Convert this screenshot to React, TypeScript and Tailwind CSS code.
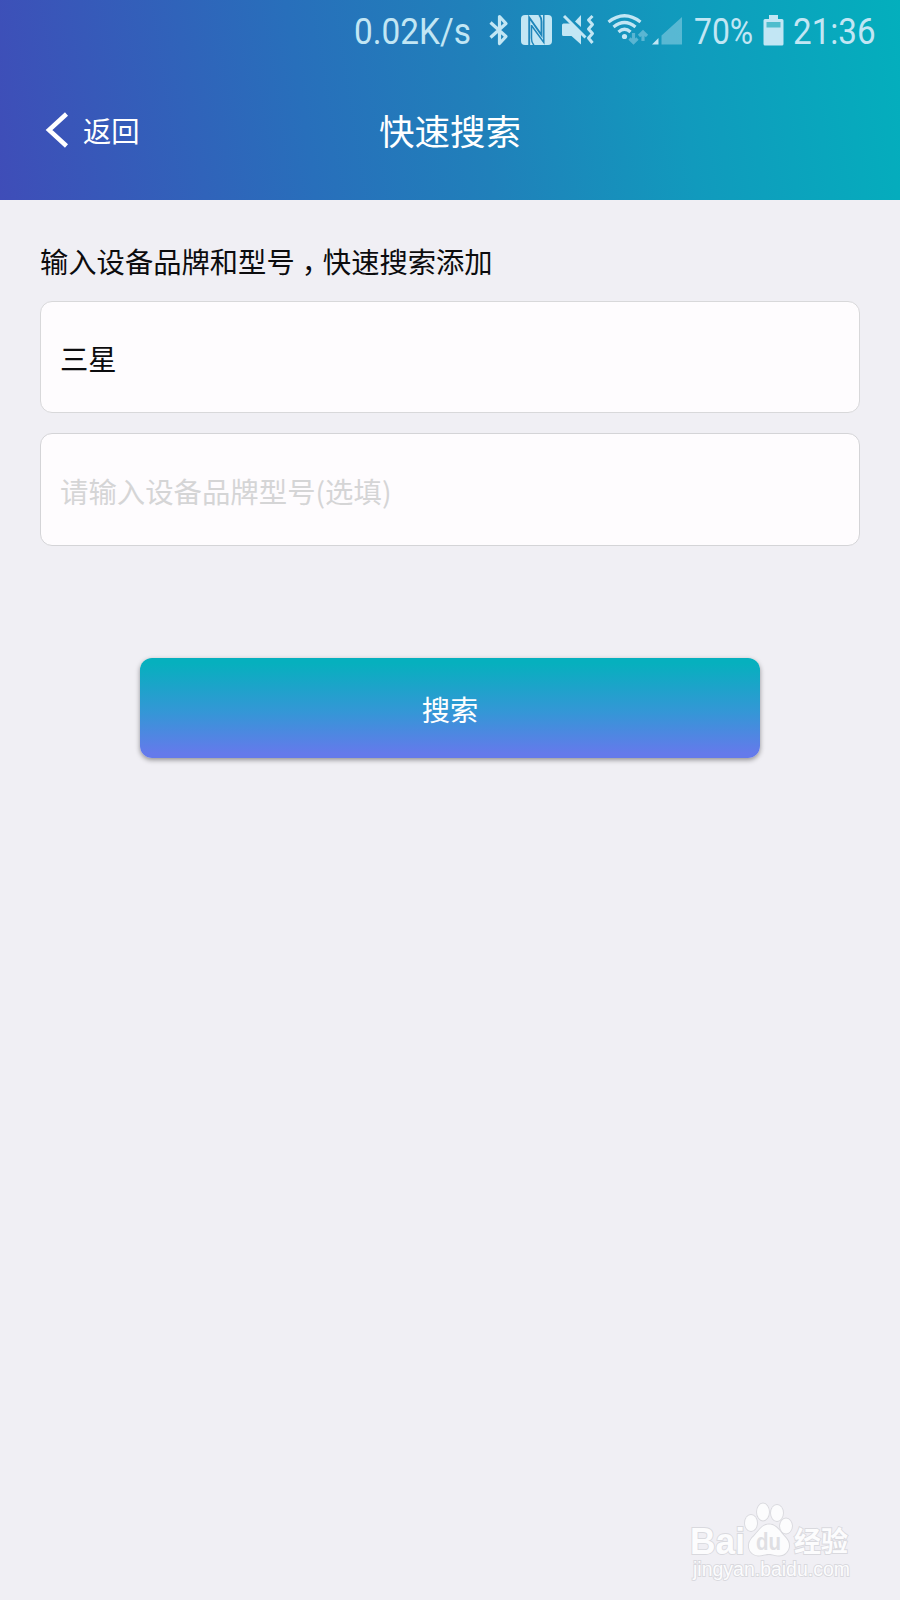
import type { ReactNode } from 'react';

function StatusText({ width, children }: { width: string; children: ReactNode }) {
  return (
    <span className={`mt-[1px] block shrink-0 whitespace-nowrap font-[Roboto,sans-serif] text-[37.5px] leading-[60px] ${width}`}>
      {children}
    </span>
  );
}

function BluetoothIcon() {
  return (
    <svg className="block h-[34px] w-[22px] shrink-0" viewBox="0 0 22 34" fill="none" stroke="currentColor" strokeWidth="3.2">
      <path d="M2.5 9.5 18 23.5 11.5 30.5V3.5L18 10.5 2.5 24.5" strokeLinejoin="round" />
    </svg>
  );
}

function NfcIcon() {
  return (
    <svg className="block h-[30px] w-[31px] shrink-0" viewBox="0 0 31 30">
      <rect width="31" height="30" rx="4" fill="currentColor" />
      <path d="M8.2 30V2.5L20.5 20V7Q20.5 2 18 0" fill="none" stroke="#1f86ba" strokeWidth="1.9" />
      <path d="M10.5 10.5 22.8 27.5V0M10.5 10V23Q10.5 28 13 30" fill="none" stroke="#1f86ba" strokeWidth="1.5" />
    </svg>
  );
}

function MuteVibrateIcon() {
  return (
    <svg className="block h-[32px] w-[34px] shrink-0" viewBox="0 0 34 32" fill="currentColor">
      <path d="M1.5 9.5H9L19 19.5V30.5L9.5 22H1.5Q0 22 0 20.5V11Q0 9.5 1.5 9.5ZM19 1V13L13 7.5Z" />
      <path d="M2 2 23.5 23.5" fill="none" stroke="currentColor" strokeWidth="3" />
      <path d="M30.5 2 26.5 6 30.5 10.5 26.5 15 30.5 19.5 26.5 24 30.5 29" fill="none" stroke="currentColor" strokeWidth="3" strokeLinejoin="round" />
    </svg>
  );
}

function WifiIcon() {
  return (
    <svg className="block h-[32px] w-[42px] shrink-0" viewBox="0 0 42 32" fill="none" stroke="currentColor" strokeWidth="3.2">
      <path d="M1.5 8Q17.5-4.5 33.5 8M6.5 13Q17.5 4 28.5 13M11.5 18Q17.5 12.5 23.5 18" />
      <circle cx="17.5" cy="22.5" r="2.6" fill="currentColor" stroke="none" />
      <g opacity=".4">
        <path d="M26.5 19V28M22.5 24.5 26.5 28.5 30.5 24.5" />
        <path d="M36 27V18M32 22 36 18 40 22" />
      </g>
    </svg>
  );
}

function SignalIcon() {
  return (
    <svg className="block h-[28px] w-[31px] shrink-0" viewBox="0 0 31 28" fill="currentColor">
      <path d="M0 27.5 6.5 21V27.5Z" />
      <path d="M9.5 18.5 30 0V27.5H9.5Z" opacity=".4" />
    </svg>
  );
}

function BatteryIcon() {
  return (
    <svg className="block h-[31px] w-[21px] shrink-0" viewBox="0 0 21 31" fill="currentColor">
      <path d="M6 0H15V4H19Q20.5 4 20.5 5.5V29Q20.5 30.5 19 30.5H2Q.5 30.5 .5 29V5.5Q.5 4 2 4H6Z" />
      <path d="M3.5 7H17.5V12.5H3.5Z" fill="#4fbdcd" />
    </svg>
  );
}

function StatusBar() {
  return (
    <div className="flex h-[60px] items-center pl-[354px] text-[#c2e6f4]">
      <StatusText width="w-[134px]">
        <span className="inline-block origin-left scale-x-[0.89]">0.02K/s</span>
      </StatusText>
      <BluetoothIcon />
      <div className="ml-[11px]"><NfcIcon /></div>
      <div className="ml-[10px]"><MuteVibrateIcon /></div>
      <div className="ml-[11px]"><WifiIcon /></div>
      <div className="ml-[3px] mt-[1px]"><SignalIcon /></div>
      <StatusText width="ml-[11px] w-[69px]">
        <span className="inline-block origin-left scale-x-[0.85]">70%</span>
      </StatusText>
      <BatteryIcon />
      <StatusText width="ml-[9px] w-[90px]">
        <span className="inline-block origin-left scale-x-[0.885]">21:36</span>
      </StatusText>
    </div>
  );
}

function Header() {
  return (
    <header className="h-[200px] bg-[linear-gradient(81deg,#3f4db8_0%,#286fbb_34%,#2080ba_53%,#119abd_75%,#03afbd_100%)]">
      <StatusBar />
      <div className="grid h-[140px] grid-cols-3 items-start pt-[45px] text-white">
        <div className="flex h-[50px] items-center pl-[45px]">
          <svg className="block h-[36px] w-[24px]" viewBox="0 0 24 36" fill="none" stroke="currentColor" strokeWidth="4.5">
            <path d="M21.5 2 4 18 21.5 34" />
          </svg>
          <span className="ml-[14px] text-[28.3px] leading-[50px]">返回</span>
        </div>
        <h1 className="text-center text-[35.5px] leading-[50px]">快速搜索</h1>
      </div>
    </header>
  );
}

function Watermark() {
  return (
    <svg className="block h-[90px] w-[176px] overflow-visible" viewBox="0 0 176 90" fill="#fcfcfd" stroke="#d9d9de" strokeWidth="1.8" paintOrder="stroke">
      <text x="0" y="57" textLength="55" lengthAdjust="spacingAndGlyphs" fontFamily="Liberation Sans" fontWeight="700" fontSize="37">Bai</text>
      <ellipse cx="61" cy="26" rx="6" ry="8" />
      <ellipse cx="73" cy="15" rx="6" ry="8.5" />
      <ellipse cx="87" cy="16" rx="6" ry="8" />
      <ellipse cx="96" cy="29" rx="6" ry="7.5" />
      <path d="M79 27.5C87 27.5 90 35 95 40 103 48 98 58 89 58.5 84 58.5 83 57 79 57 75 57 73 58.5 68 58.5 59 57.5 56 48 62 41 68 36 71 27.5 79 27.5Z" />
      <text x="66" y="52.5" textLength="25" lengthAdjust="spacingAndGlyphs" fontFamily="Liberation Sans" fontWeight="700" fontSize="24" fill="#dfdfe3" stroke="none">du</text>
      <text x="104" y="55" textLength="54" lengthAdjust="spacingAndGlyphs" fontFamily="Noto Sans CJK SC" fontWeight="700" fontSize="28">经验</text>
      <text x="3" y="78.5" textLength="157" lengthAdjust="spacingAndGlyphs" fontFamily="Liberation Sans" fontSize="20">jingyan.baidu.com</text>
    </svg>
  );
}

export default function App() {
  return (
    <div className="flex h-[1600px] w-[900px] flex-col overflow-hidden bg-[#f0eff4] font-['Noto_Sans_CJK_SC',sans-serif]">
      <Header />
      <main className="flex flex-1 flex-col px-10 pt-[41px]">
        <p className="text-[28.3px] leading-[40px] text-[#0c0c0e]">
          输入设备品牌和型号<span className="mx-[7px] [font-feature-settings:'halt']">，</span>快速搜索添加
        </p>
        <div className="mt-[20px] flex h-[112px] items-center rounded-xl border border-[#d8d8da] bg-[#fefcfe] px-[19px] pt-[2px] text-[28.3px] text-[#0c0c0e]">
          三星
        </div>
        <div className="mt-[20px] flex h-[113px] items-center rounded-xl border border-[#d4d4d7] bg-[#fefcfe] px-[19px] pt-[3px] text-[28.4px] text-[#d5d5d6]">
          请输入设备品牌型号(选填)
        </div>
        <button className="mx-auto mt-[112px] h-[100px] w-[620px] rounded-xl bg-[linear-gradient(180deg,#06b0be_5%,#3596d7_55%,#647aeb_95%)] pt-[2px] text-[28.3px] text-white shadow-[0_2px_5px_rgba(0,0,0,0.4)]">
          搜索
        </button>
      </main>
      <footer className="flex justify-end pb-[13px] pr-[34px]">
        <Watermark />
      </footer>
    </div>
  );
}
